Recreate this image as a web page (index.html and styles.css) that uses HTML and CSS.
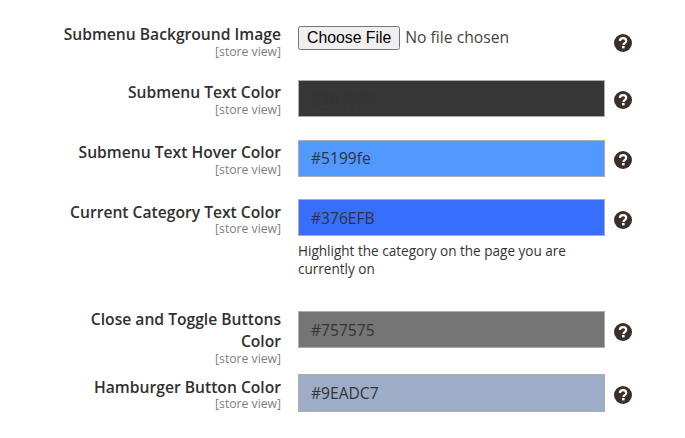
FILE: index.html
```html
<!DOCTYPE html>
<html lang="en">
<head>
<meta charset="utf-8">
<title>Submenu settings</title>
<link rel="stylesheet" href="styles.css">
</head>
<body>
<svg class="sprite" width="0" height="0" aria-hidden="true">
  <symbol id="help" viewBox="0 0 18 18">
    <circle cx="9" cy="9" r="9" fill="#3a2f2a"/>
    <path d="M5.9 7.1C5.9 5.2 7.3 4.1 9.1 4.1c1.8 0 3.1 1.1 3.1 2.7 0 2.4-2.7 2.4-2.7 4.1" fill="none" stroke="#fff" stroke-width="2.2"/>
    <rect x="8" y="12" width="2.6" height="2.4" fill="#fff"/>
  </symbol>
</svg>
<main class="form">
  <div class="row row-file">
    <div class="label"><span class="name">Submenu Background Image</span><span class="scope">[store view]</span></div>
    <div class="control"><input class="file" type="file"></div>
    <svg class="help"><use href="#help"/></svg>
  </div>
  <div class="row">
    <div class="label"><span class="name">Submenu Text Color</span><span class="scope">[store view]</span></div>
    <div class="control"><input class="swatch swatch-dark" type="text" value="#363636"></div>
    <svg class="help"><use href="#help"/></svg>
  </div>
  <div class="row">
    <div class="label"><span class="name">Submenu Text Hover Color</span><span class="scope">[store view]</span></div>
    <div class="control"><input class="swatch swatch-sky" type="text" value="#5199fe"></div>
    <svg class="help"><use href="#help"/></svg>
  </div>
  <div class="row row-note">
    <div class="label"><span class="name">Current Category Text Color</span><span class="scope">[store view]</span></div>
    <div class="control">
      <input class="swatch swatch-blue" type="text" value="#376EFB">
      <p class="note">Highlight the category on the page you are currently on</p>
    </div>
    <svg class="help"><use href="#help"/></svg>
  </div>
  <div class="row row-long">
    <div class="label"><span class="name">Close and Toggle Buttons Color</span><span class="scope">[store view]</span></div>
    <div class="control"><input class="swatch swatch-grey" type="text" value="#757575"></div>
    <svg class="help"><use href="#help"/></svg>
  </div>
  <div class="row row-last">
    <div class="label"><span class="name">Hamburger Button Color</span><span class="scope">[store view]</span></div>
    <div class="control"><input class="swatch swatch-slate" type="text" value="#9EADC7"></div>
    <svg class="help"><use href="#help"/></svg>
  </div>
</main>
</body>
</html>
```
FILE: styles.css
```css
* { box-sizing: border-box; }
html, body { margin: 0; background: #fff; }
body { font-family: "Open Sans", sans-serif; color: #333; overflow: hidden; height: 438px; }
.sprite { position: absolute; }
.form { padding-top: 26px; }
.row {
  display: grid;
  grid-template-columns: 298px 307px 27px;
  align-items: start;
  margin-bottom: 22.5px;
}
.row-file { margin-bottom: 21px; }
.row-note { margin-bottom: 33px; }
.row-long { margin-bottom: 8px; }
.label { text-align: right; display: flex; flex-direction: column; padding: 1px 17px 0 56px; }
.row-file .label, .row-long .label { padding-top: 0; margin-top: -3px; }
.row-note .label, .row-last .label { padding-top: 2px; }
.row-note .scope, .row-last .scope { margin-top: -1px; }
.name { font-size: 15.65px; font-weight: 600; line-height: 22px; color: #303030; }
.scope { font-size: 12.2px; line-height: 14px; color: #808080; }
.file { display: block; font-family: "Open Sans", sans-serif; font-size: 15.7px; color: #444; width: 100%; }
.file::file-selector-button { font-size: 15.8px; margin-right: 5px; padding: 1px 7px; }
.swatch {
  display: block;
  width: 307px;
  height: 37px;
  border: 1px solid #adadad;
  padding: 0 12px;
  font-family: "Open Sans", sans-serif;
  font-size: 15.6px;
  color: #333;
  outline: none;
}
.swatch-dark { background: #363636; }
.swatch-sky { background: #5199fe; }
.swatch-blue { background: #376efb; }
.swatch-grey { background: #757575; }
.swatch-slate { background: #9eadc7; height: 38px; }
.note { margin: 6px 0 0; font-size: 13.55px; line-height: 18px; color: #333; }
.help { width: 18px; height: 18px; margin: 11px 0 0 9px; }
.row-file .help { margin-top: 8px; }
.row-note .help, .row-long .help, .row-last .help { margin-top: 12px; }
```
